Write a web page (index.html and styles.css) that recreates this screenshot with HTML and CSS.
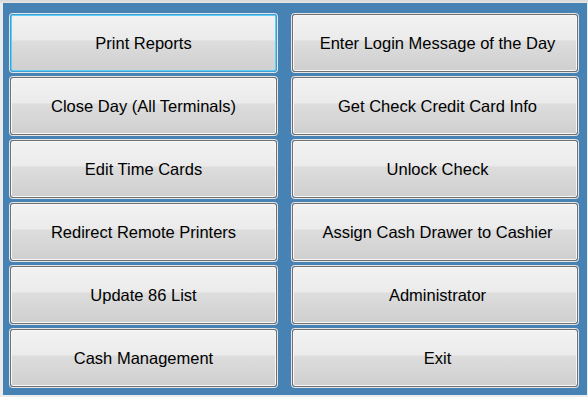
FILE: index.html
```html
<!DOCTYPE html>
<html>
<head>
<meta charset="utf-8">
<link rel="stylesheet" href="styles.css">
</head>
<body>
<div class="panel">
  <button class="btn focus">Print Reports</button>
  <button class="btn right">Enter Login Message of the Day</button>
  <button class="btn">Close Day (All Terminals)</button>
  <button class="btn right">Get Check Credit Card Info</button>
  <button class="btn">Edit Time Cards</button>
  <button class="btn right">Unlock Check</button>
  <button class="btn">Redirect Remote Printers</button>
  <button class="btn right">Assign Cash Drawer to Cashier</button>
  <button class="btn">Update 86 List</button>
  <button class="btn right">Administrator</button>
  <button class="btn">Cash Management</button>
  <button class="btn right">Exit</button>
</div>
</body>
</html>
```
FILE: styles.css
```css
html, body {
  margin: 0;
  padding: 0;
}
body {
  width: 588px;
  height: 397px;
  background: linear-gradient(#d8d8d8, #ececec 4px, #ececec);
  overflow: hidden;
}
.panel {
  margin: 3px 0 0 3px;
  width: 584px;
  height: 392px;
  box-sizing: border-box;
  background: #4682b4;
  padding: 11px 0 0 7px;
  display: grid;
  grid-template-columns: 267px 286px;
  grid-auto-rows: 58px;
  column-gap: 15px;
  row-gap: 5px;
}
.btn {
  margin: 0;
  padding: 0;
  border: 1px solid #707070;
  border-radius: 3px;
  box-shadow: 0 0 0 1px #e6e6e6, inset 0 0 0 1px #f8f8f8;
  background: linear-gradient(#f2f2f2 0%, #ebebeb 45%, #dddddd 46%, #cfcfcf 100%);
  font-family: "Liberation Sans", Arial, sans-serif;
  font-size: 16.5px;
  color: #000;
  text-align: center;
  cursor: default;
}
.btn.right {
  padding-left: 5px;
}
.btn.focus {
  border-color: #3c9fd8;
  box-shadow: 0 0 0 1px #e6e6e6, inset 0 0 0 1px #5ed0f6;
}
```
